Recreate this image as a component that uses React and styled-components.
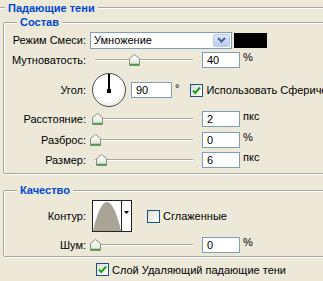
import React from "react";
import styled, { createGlobalStyle } from "styled-components";

const GlobalStyle = createGlobalStyle`
  html, body {
    margin: 0;
    padding: 0;
    background: #ece9d8;
    overflow: hidden;
  }
  body {
    font-family: "Liberation Sans", Arial, sans-serif;
    font-size: 11px;
    color: #000;
  }
`;

const Panel = styled.div`
  width: 360px;
  height: 281px;
  padding-left: 3px;
  box-sizing: border-box;
`;

const Heading = styled.div`
  display: flex;
  align-items: center;
  height: 16px;
  margin-left: -3px;
`;

const Etch = styled.div`
  height: 0;
  border-top: 1px solid #aca899;
  border-bottom: 1px solid #fff;
  width: ${p => (p.$w ? `${p.$w}px` : "auto")};
  flex: ${p => (p.$w ? "none" : "1")};
`;

const Title = styled.span`
  padding: 0 3px;
  font-weight: 700;
  color: #0046d5;
  line-height: 12px;
`;

const Group = styled.fieldset`
  margin: ${p => p.$mt || 0}px 0 0 0;
  padding: ${p => p.$pt || 0}px 4px ${p => p.$pb || 0}px 4px;
  border: 1px solid #aca899;
  border-radius: 2px;
  box-shadow: inset 1px 1px 0 #fff, 1px 1px 0 #fff;
  min-width: 0;
`;

const Legend = styled.legend`
  margin-left: 9px;
  padding: 0 3px;
  font-weight: 700;
  color: #0046d5;
  line-height: 12px;
  background: #ece9d8;
`;

const Row = styled.div`
  display: flex;
  align-items: center;
  height: ${p => p.$h || 18}px;
  margin-top: ${p => p.$mt || 0}px;
`;

const Label = styled.label`
  width: 78px;
  flex: none;
  text-align: right;
  margin-right: 4px;
  white-space: nowrap;
`;

const Select = styled.div`
  width: 142px;
  height: 17px;
  box-sizing: border-box;
  border: 1px solid #7f9db9;
  background: #fff;
  display: flex;
  align-items: center;
  padding: 0 1px 0 3px;
`;

const SelectText = styled.span`
  flex: 1;
`;

const SelectButton = styled.div`
  width: 17px;
  height: 13px;
  border-radius: 2px;
  border: 1px solid #b9cbf3;
  box-sizing: border-box;
  background: linear-gradient(#dfe8fd, #b7cbf7);
  display: flex;
  align-items: center;
  justify-content: center;
`;

const Swatch = styled.div`
  width: 33px;
  height: 15px;
  margin-left: 2px;
  background: #000;
`;

const SliderBox = styled.div`
  position: relative;
  width: 110px;
  height: 18px;
  flex: none;
`;

const Track = styled.div`
  position: absolute;
  left: 5px;
  width: 98px;
  top: 8px;
  height: 0;
  border-top: 1px solid #aca899;
  border-bottom: 1px solid #fff;
`;

const Thumb = styled.svg`
  position: absolute;
  top: 3px;
  margin-left: -5px;
`;

const Field = styled.div`
  width: ${p => p.$w || 38}px;
  height: 16px;
  margin-left: ${p => p.$ml || 2}px;
  box-sizing: border-box;
  border: 1px solid #7f9db9;
  background: #fff;
  padding-left: 4px;
  display: flex;
  align-items: center;
  flex: none;
`;

const Unit = styled.span`
  margin-left: 3px;
  align-self: flex-start;
  margin-top: ${p => p.$mt || 0}px;
`;

const Dial = styled.div`
  position: relative;
  width: 34px;
  height: 34px;
  margin-left: 2px;
  box-sizing: border-box;
  border-radius: 50%;
  border: 1px solid #4a4a4a;
  background: radial-gradient(circle at 45% 35%, #fff 55%, #dcdcd6 100%);
  flex: none;
`;

const Needle = styled.div`
  position: absolute;
  left: 15px;
  top: 0;
  width: 2px;
  height: 17px;
  background: #000;
`;

const Hub = styled.div`
  position: absolute;
  left: 14px;
  top: 15px;
  width: 4px;
  height: 4px;
  background: #000;
`;

const CheckRow = styled.label`
  display: flex;
  align-items: center;
  white-space: nowrap;
  margin-left: ${p => p.$ml || 0}px;
`;

const Box = styled.span`
  width: 13px;
  height: 13px;
  box-sizing: border-box;
  border: 1px solid #1c5180;
  background: linear-gradient(135deg, #dcdcd7, #fff);
  margin-right: 3px;
  display: flex;
  align-items: center;
  justify-content: center;
  flex: none;
`;

const Contour = styled.div`
  display: flex;
  width: 40px;
  height: 32px;
  box-sizing: border-box;
  border: 1px solid #222;
  margin-left: 2px;
  background: #fff;
  flex: none;
`;

const ContourPic = styled.svg`
  width: 28px;
  height: 30px;
  border-right: 1px solid #222;
`;

const ContourArrow = styled.div`
  flex: 1;
  display: flex;
  justify-content: center;
  padding-top: 10px;
`;

const Footer = styled.div`
  display: flex;
  padding-left: 93px;
  margin-top: 6px;
`;

const Chevron = () => (
  <svg width="9" height="6" viewBox="0 0 9 6">
    <path d="M1 1l3.5 3.5L8 1" stroke="#4d6185" strokeWidth="2" fill="none" />
  </svg>
);

const Check = ({ on }) => (
  <Box>
    {on ? (
      <svg width="9" height="9" viewBox="0 0 9 9">
        <path d="M1 4.5l2.3 2.5L8 1.5" stroke="#21a121" strokeWidth="2" fill="none" />
      </svg>
    ) : null}
  </Box>
);

const Slider = ({ value }) => (
  <SliderBox>
    <Track />
    <Thumb
      width="11"
      height="12"
      viewBox="0 0 11 12"
      style={{ left: 5 + (value / 100) * 98 }}
    >
      <defs>
        <linearGradient id="thumbFill" x1="0" y1="0" x2="0" y2="1">
          <stop offset="0" stopColor="#fff" />
          <stop offset="1" stopColor="#e2e2da" />
        </linearGradient>
      </defs>
      <path d="M0.5 4.5L5.5 0.5L10.5 4.5V11.5H0.5Z" fill="url(#thumbFill)" stroke="#8c8c84" />
      <path d="M1 10.5H10" stroke="#3da33d" strokeWidth="1.5" />
    </Thumb>
  </SliderBox>
);

const SliderRow = ({ label, value, unit, mt, unitMt }) => (
  <Row $mt={mt}>
    <Label>{label}</Label>
    <Slider value={value} />
    <Field>{value}</Field>
    <Unit $mt={unitMt}>{unit}</Unit>
  </Row>
);

export default function App() {
  return (
    <>
      <GlobalStyle />
      <Panel>
        <Heading>
          <Etch $w={5} />
          <Title>Падающие тени</Title>
          <Etch />
        </Heading>

        <Group $pt={3} $pb={4}>
          <Legend>Состав</Legend>
          <Row $h={18}>
            <Label>Режим Смеси:</Label>
            <Select>
              <SelectText>Умножение</SelectText>
              <SelectButton>
                <Chevron />
              </SelectButton>
            </Select>
            <Swatch />
          </Row>
          <SliderRow label="Мутноватость:" value={40} unit="%" mt={2} />
          <Row $h={36} $mt={3}>
            <Label>Угол:</Label>
            <Dial>
              <Needle />
              <Hub />
            </Dial>
            <Field $w={41} $ml={5}>90</Field>
            <Unit $mt={10}>°</Unit>
            <CheckRow $ml={11}>
              <Check on />
              Использовать Сферическое освещение
            </CheckRow>
          </Row>
          <SliderRow label="Расстояние:" value={2} unit="пкс" mt={2} />
          <SliderRow label="Разброс:" value={0} unit="%" mt={3} />
          <SliderRow label="Размер:" value={6} unit="пкс" mt={2} />
        </Group>

        <Group $mt={10} $pt={4} $pb={2}>
          <Legend>Качество</Legend>
          <Row $h={32}>
            <Label>Контур:</Label>
            <Contour>
              <ContourPic viewBox="0 0 28 30">
                <path d="M0 30C4 12 9 1 14 1S24 12 28 30Z" fill="#a8a597" />
              </ContourPic>
              <ContourArrow>
                <svg width="5" height="3" viewBox="0 0 5 3">
                  <path d="M0 0H5L2.5 3Z" fill="#000" />
                </svg>
              </ContourArrow>
            </Contour>
            <CheckRow $ml={15}>
              <Check />
              Сглаженные
            </CheckRow>
          </Row>
          <SliderRow label="Шум:" value={0} unit="%" mt={4} />
        </Group>

        <Footer>
          <CheckRow>
            <Check on />
            Слой Удаляющий падающие тени
          </CheckRow>
        </Footer>
      </Panel>
    </>
  );
}
